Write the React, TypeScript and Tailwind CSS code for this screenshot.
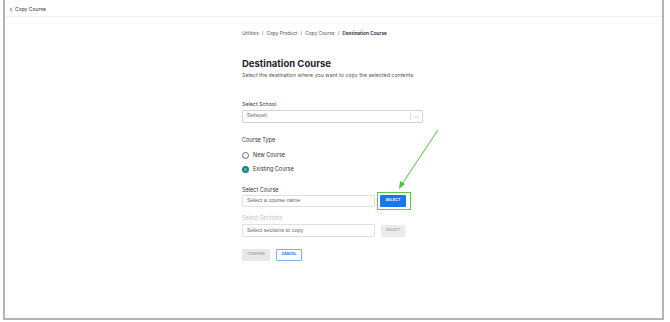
import * as React from "react";

function Radio({ checked }: { checked: boolean }) {
	return checked ? (
		<span className="w-[7px] h-[7px] rounded-full bg-[#22799a] flex items-center justify-center">
			<span className="w-[2.5px] h-[2.5px] rounded-full bg-[#5cc06a]" />
		</span>
	) : (
		<span className="w-[7px] h-[7px] rounded-full border border-[#666]" />
	);
}

export default function App() {
	const [courseType, setCourseType] = React.useState<"new" | "existing">(
		"existing",
	);

	return (
		<div className="w-[670px] h-[322px] bg-white font-['Inter',sans-serif] text-[#1f2433] overflow-hidden">
			<div className="ml-[3px] w-[661px] h-[320px] border-x-2 border-b-2 border-[#b4b4b4] flex flex-col relative">
				{/* Top bar */}
				<div className="h-[17px] flex items-center gap-[2px] pl-[4px] pt-[2px] border-b border-[#f0f0f0] text-[5px] leading-none text-[#333]">
					<svg width="4" height="5" viewBox="0 0 4 6" fill="none" stroke="#333" strokeWidth="0.9">
						<path d="M3 1L1 3l2 2" />
					</svg>
					Copy Course
				</div>

				<main className="pl-[237px] pt-[13px] flex flex-col w-[420px]">
					<nav className="h-[6px] leading-[6px] flex items-center gap-[3px] text-[4.8px] text-[#555]">
						<span>Utilities</span>
						<span>/</span>
						<span>Copy Product</span>
						<span>/</span>
						<span>Copy Course</span>
						<span>/</span>
						<span className="font-semibold text-[#1f2433]">Destination Course</span>
					</nav>

					<h1 className="mt-[23px] h-[10px] leading-[10px] text-[9.5px] font-bold text-[#1f2433]">
						Destination Course
					</h1>
					<p className="mt-[3px] h-[6px] leading-[6px] text-[5.3px] text-[#555]">
						Select the destination where you want to copy the selected contents
					</p>

					<div className="mt-[23px] h-[6px] leading-[6px] text-[5.3px] text-[#333]">Select School</div>
					<div className="mt-[3px] w-[181px] h-[13px] border border-[#d4d4d4] rounded-[1px] flex items-center pl-[4px] text-[4.5px] leading-none text-[#555]">
						<span className="flex-1">Satheesh</span>
						<span className="h-[7px] border-l border-[#ddd]" />
						<svg
							className="mx-[3px]"
							width="5"
							height="4"
							viewBox="0 0 10 6"
							fill="none"
							stroke="#aaa"
							strokeWidth="1.2"
						>
							<path d="M1 1l4 4 4-4" />
						</svg>
					</div>

					<div className="mt-[14px] h-[6px] leading-[6px] text-[5.5px] text-[#333]">Course Type</div>
					<div className="mt-[9px] flex flex-col gap-[7px]">
						<button
							type="button"
							onClick={() => setCourseType("new")}
							className="h-[7px] flex items-center gap-[4px] text-[5.5px] leading-none text-[#333]"
						>
							<Radio checked={courseType === "new"} />
							New Course
						</button>
						<button
							type="button"
							onClick={() => setCourseType("existing")}
							className="h-[7px] flex items-center gap-[4px] text-[5.5px] leading-none text-[#333]"
						>
							<Radio checked={courseType === "existing"} />
							Existing Course
						</button>
					</div>

					<div className="mt-[14px] h-[6px] leading-[6px] text-[5.5px] text-[#333]">Select Course</div>
					<div className="mt-[2px] h-[12px] flex items-center">
						<div className="w-[133px] h-[12px] border border-[#e0e0e0] rounded-[1px] flex items-center pl-[4px] text-[5.5px] leading-none text-[#666] font-['Liberation_Sans',sans-serif]">
							Select a course name
						</div>
						<div className="relative ml-[5px] flex">
							<div className="absolute -top-[3px] -bottom-[3px] -left-[3px] -right-[5px] border-[1.5px] border-[#5cc94f]" />
							<button
								type="button"
								className="w-[26px] h-[12px] bg-[#1778f2] rounded-[1px] text-white text-[3.6px] leading-none font-bold tracking-[0.2px]"
							>
								SELECT
							</button>
						</div>
					</div>

					<div className="mt-[8px] h-[6px] leading-[6px] text-[5.5px] text-[#c2c2c2]">Select Sections</div>
					<div className="mt-[3px] h-[13px] flex items-center gap-[6px]">
						<div className="w-[133px] h-[13px] border border-[#e0e0e0] rounded-[1px] flex items-center pl-[4px] text-[5.5px] leading-none text-[#666] font-['Liberation_Sans',sans-serif]">
							Select sections to copy
						</div>
						<button
							type="button"
							className="w-[24px] h-[12px] bg-[#ebebeb] rounded-[1px] text-[#aaa] text-[3.6px] leading-none font-bold"
						>
							SELECT
						</button>
					</div>

					<div className="mt-[12px] h-[12px] flex items-center gap-[6px]">
						<button
							type="button"
							className="w-[28px] h-[12px] bg-[#e8e8e8] rounded-[1px] text-[#aaa] text-[3.6px] leading-none font-bold"
						>
							CONFIRM
						</button>
						<button
							type="button"
							className="w-[26px] h-[12px] border border-[#7fb1f5] rounded-[1px] text-[#2a6fd6] text-[3.6px] leading-none font-bold"
						>
							CANCEL
						</button>
					</div>
				</main>

				{/* annotation arrow */}
				<svg
					className="absolute left-0 top-0 pointer-events-none"
					width="661"
					height="320"
					viewBox="0 0 661 320"
				>
					<line x1="433" y1="130" x2="397" y2="184" stroke="#4cc43f" strokeWidth="1" />
					<path d="M394 189 L395 181 L400 184 Z" fill="#4cc43f" />
				</svg>
			</div>
		</div>
	);
}
